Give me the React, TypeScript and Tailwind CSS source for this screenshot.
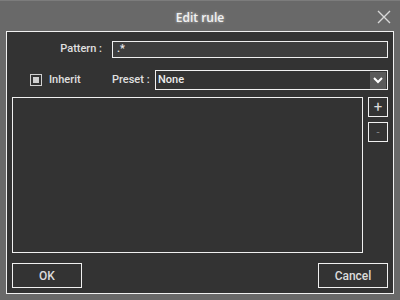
import React from 'react';

const font = { fontFamily: 'Roboto, "Liberation Sans", sans-serif' };

const App: React.FC = () => {
    return (
        <div className="w-[400px] h-[300px] bg-[#696969] border-t border-[#7c7c7c] flex flex-col text-[#e0e0e0] text-[11px] font-medium" style={font}>
            <div className="h-[30px] relative flex items-center justify-center">
                <span className="text-[12px] font-semibold text-[#f2f2f2] [text-shadow:0_0_3px_rgba(255,255,255,0.6)] mt-[3px]" style={{ fontFamily: '"Open Sans", sans-serif' }}>Edit rule</span>
                <svg className="absolute left-[377px] top-[9px]" width="14" height="14" viewBox="0 0 14 14">
                    <path d="M1 1 L13 13 M13 1 L1 13" stroke="#d8d8d8" strokeWidth="1.4" />
                </svg>
            </div>

            <div className="ml-[6px] w-[388px] h-[263px] border border-[#f0f0f0] bg-[#333333] flex flex-col px-[5px] pt-[9px] pb-[5px]">
                <div className="flex items-center">
                    <div className="w-[100px] shrink-0 pr-[10px] text-right whitespace-nowrap">Pattern :</div>
                    <div className="flex-1 h-[17px] border border-[#f0f0f0] bg-[#3e3e3e] flex items-center pl-[4px] text-[#ececec]">.*</div>
                </div>

                <div className="flex items-center mt-[12px] h-[20px]">
                    <div className="ml-[18px] shrink-0 w-[12px] h-[12px] border border-[#d0d0d0] flex items-center justify-center">
                        <div className="w-[6px] h-[6px] bg-[#cfcfcf]" />
                    </div>
                    <span className="ml-[7px] w-[63px] shrink-0 whitespace-nowrap">Inherit</span>
                    <span className="w-[43px] shrink-0 whitespace-nowrap">Preset :</span>
                    <div className="w-[233px] shrink-0 h-[20px] border border-[#f0f0f0] flex items-center justify-between pl-[2px]">
                        <span className="text-[#ececec]">None</span>
                        <div className="w-[16px] h-[17px] mr-[1px] bg-[#5a5a5a] flex items-center justify-center">
                            <svg width="10" height="8" viewBox="0 0 10 8">
                                <path d="M1 2 L5 6 L9 2" stroke="#ffffff" strokeWidth="2" fill="none" />
                            </svg>
                        </div>
                    </div>
                </div>

                <div className="flex mt-[7px] gap-[5px]">
                    <div className="w-[351px] h-[156px] border border-[#f0f0f0] bg-[#333333]" />
                    <div className="flex flex-col gap-[5px]">
                        <button className="w-[20px] h-[20px] border border-[#f0f0f0] flex items-center justify-center text-[#dcdcdc] text-[15px] font-normal leading-none">+</button>
                        <button className="w-[20px] h-[20px] border border-[#f0f0f0] flex items-center justify-center text-[#8a8a8a] text-[11px] font-normal leading-none">-</button>
                    </div>
                </div>

                <div className="flex justify-between mt-auto">
                    <button className="w-[70px] h-[25px] border border-[#f0f0f0] text-[#dcdcdc] text-[12px]">OK</button>
                    <button className="w-[70px] h-[25px] border border-[#f0f0f0] text-[#dcdcdc] text-[12px]">Cancel</button>
                </div>
            </div>
        </div>
    );
};

export default App;
